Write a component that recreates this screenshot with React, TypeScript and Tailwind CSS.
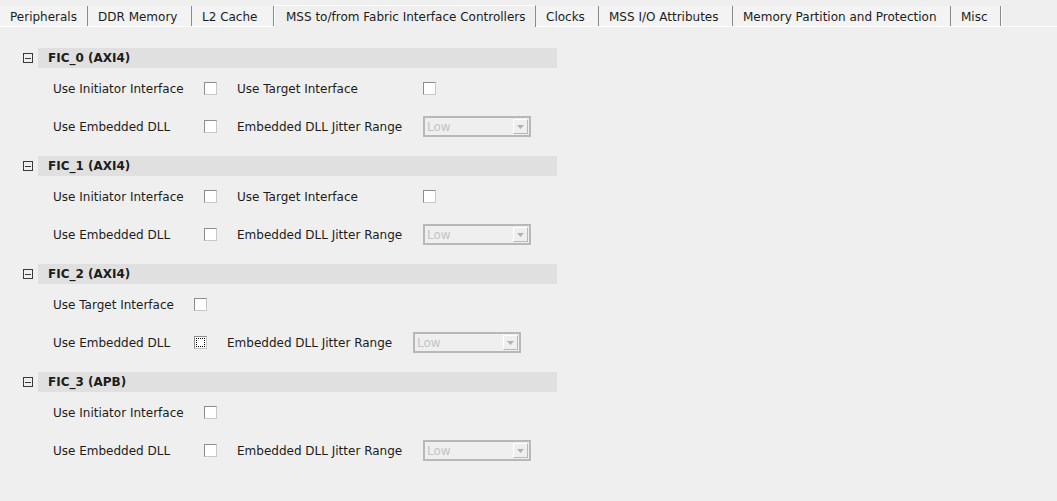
import React from "react"

type Section = {
  title: string
  labelW: string
  rows: { a: string; aFocused?: boolean; b?: "target" | "range" }[]
}

const tabs = [
  { name: "Peripherals", w: "w-[88px]" },
  { name: "DDR Memory", w: "w-[104px]" },
  { name: "L2 Cache", w: "w-[82px]" },
  { name: "MSS to/from Fabric Interface Controllers", w: "w-[262px]", active: true },
  { name: "Clocks", w: "w-[63px]" },
  { name: "MSS I/O Attributes", w: "w-[134px]" },
  { name: "Memory Partition and Protection", w: "w-[218px]" },
  { name: "Misc", w: "w-[50px]" },
]

const sections: Section[] = [
  {
    title: "FIC_0 (AXI4)",
    labelW: "w-[151px]",
    rows: [
      { a: "Use Initiator Interface", b: "target" },
      { a: "Use Embedded DLL", b: "range" },
    ],
  },
  {
    title: "FIC_1 (AXI4)",
    labelW: "w-[151px]",
    rows: [
      { a: "Use Initiator Interface", b: "target" },
      { a: "Use Embedded DLL", b: "range" },
    ],
  },
  {
    title: "FIC_2 (AXI4)",
    labelW: "w-[141px]",
    rows: [
      { a: "Use Target Interface" },
      { a: "Use Embedded DLL", aFocused: true, b: "range" },
    ],
  },
  {
    title: "FIC_3 (APB)",
    labelW: "w-[151px]",
    rows: [
      { a: "Use Initiator Interface" },
      { a: "Use Embedded DLL", b: "range" },
    ],
  },
]

function Checkbox({ focused }: { focused?: boolean }) {
  return (
    <span className="w-[13px] h-[13px] bg-white border border-t-[#8d8d8d] border-l-[#8d8d8d] border-r-[#c8c8c8] border-b-[#c8c8c8] flex items-center justify-center">
      {focused && <span className="w-[9px] h-[9px] border border-dotted border-black" />}
    </span>
  )
}

function LowSelect() {
  return (
    <div className="w-[108px] h-[21px] border-2 border-[#b8b8b8] bg-[#efefef] flex items-center justify-between">
      <span className="pl-[2px] text-[#c4c4c4]">Low</span>
      <span className="w-[15px] h-[15px] mr-[1px] border border-t-white border-l-white border-r-[#b8b8b8] border-b-[#b8b8b8] flex items-center justify-center">
        <svg width="7" height="4" viewBox="0 0 7 4">
          <path d="M0 0h7L3.5 4z" fill="#b0b0b0" />
        </svg>
      </span>
    </div>
  )
}

export default function App() {
  return (
    <div className="w-[1057px] h-[501px] bg-[#efefef] text-[12px] text-[#1c1c1c] font-['DejaVu_Sans',sans-serif] overflow-hidden">
      {/* tab bar */}
      <div className="flex items-end h-[27px] border-b border-white">
        {tabs.map(t =>
          t.active ? (
            <div
              key={t.name}
              className={`${t.w} h-[22px] -mb-px bg-[#efefef] border-t border-l border-white border-r border-r-[#8a8a8a] pl-[11px] pt-[3px] leading-[17px] whitespace-nowrap`}
            >
              {t.name}
            </div>
          ) : (
            <div
              key={t.name}
              className={`${t.w} h-[20px] bg-[#f3f3f3] border-r border-r-[#8a8a8a] shadow-[1px_0_0_#ffffff] pl-[10px] pt-[3px] leading-[17px] whitespace-nowrap`}
            >
              {t.name}
            </div>
          )
        )}
      </div>

      {/* sections */}
      <div className="pt-[21px] flex flex-col">
        {sections.map(s => (
          <div key={s.title} className="h-[108px]">
            <div className="flex items-center h-[20px]">
              <span className="w-[38px] pl-[23px] flex items-center">
                <span className="w-[10px] h-[10px] border border-[#3a3a3a] flex items-center justify-center">
                  <span className="w-[6px] h-px bg-[#3a3a3a]" />
                </span>
              </span>
              <div className="w-[519px] h-[20px] bg-[#e0e0e0] pl-[10px] pt-px font-bold leading-[19px]">{s.title}</div>
            </div>
            <div className="pl-[53px] pt-[10px] flex flex-col gap-[17px]">
              {s.rows.map((r, i) => (
                <div key={i} className="flex items-center h-[21px]">
                  <span className={`${s.labelW} whitespace-nowrap`}>{r.a}</span>
                  <Checkbox focused={r.aFocused} />
                  {r.b && (
                    <>
                      <span className="ml-[20px] w-[186px] whitespace-nowrap">
                        {r.b === "target" ? "Use Target Interface" : "Embedded DLL Jitter Range"}
                      </span>
                      {r.b === "target" ? <Checkbox /> : <LowSelect />}
                    </>
                  )}
                </div>
              ))}
            </div>
          </div>
        ))}
      </div>
    </div>
  )
}
